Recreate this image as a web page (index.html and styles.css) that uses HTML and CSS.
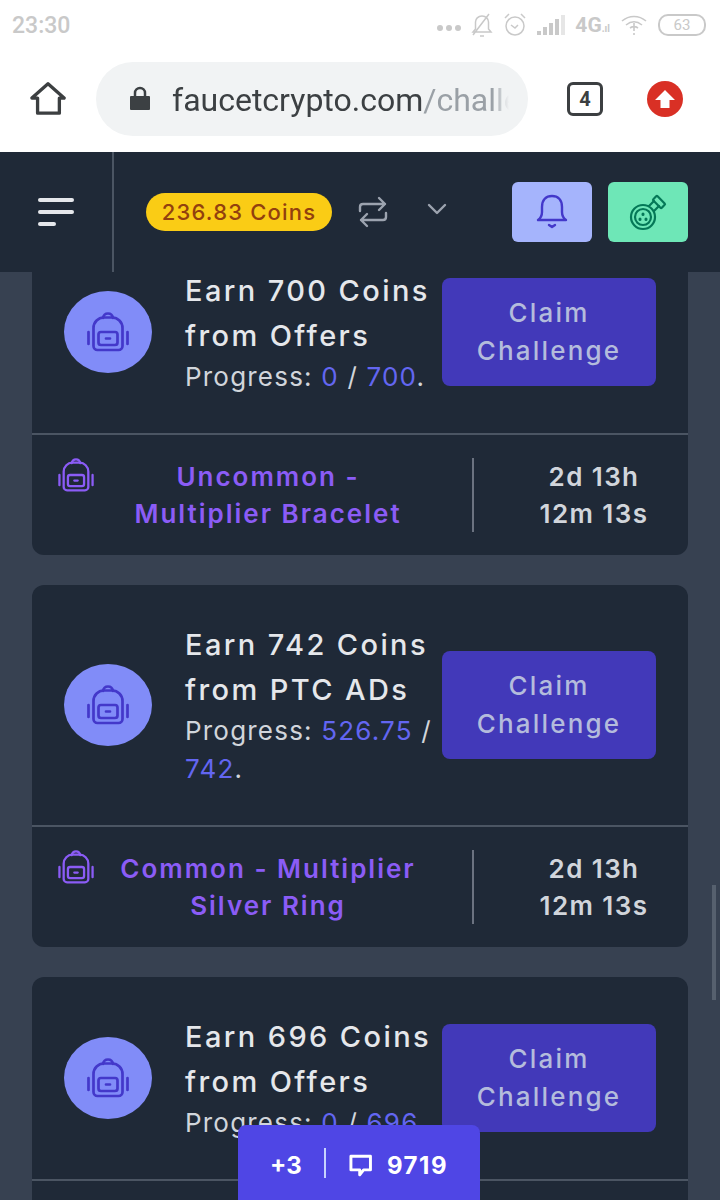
FILE: index.html
```html
<!DOCTYPE html>
<html>

<head>
  <title>Challenges</title>
  <meta name="viewport" content="width=device-width, initial-scale=1">
  <link rel="stylesheet" href="styles.css">
</head>

<body>
  <svg class="defs" width="0" height="0">
    <symbol id="backpack" viewBox="0 0 42 40" fill="none" stroke="currentColor" stroke-width="2.700" stroke-linecap="round" stroke-linejoin="round">
      <path d="M16 6c.5-3 2.300-4.500 5-4.500s4.500 1.500 5 4.500"/>
      <path d="M6.500 34V16c0-6 5-10.500 10-10.500h9c5 0 10 4.500 10 10.500v18a4 4 0 0 1-4 4h-21a4 4 0 0 1-4-4z"/>
      <rect x="11.500" y="20" width="19" height="13" rx="2.500"/>
      <path d="M19 26.500h4M1.500 20v12M40.500 20v12"/>
    </symbol>
  </svg>

  <div class="statusbar">
    <span class="clock">23:30</span>
    <div class="status-icons">
      <span class="dots"><i></i><i></i><i></i></span>
      <svg width="22" height="26" viewBox="0 0 22 26" fill="none" stroke="#c9c9c9" stroke-width="1.500"><path d="M2 20h18l-2.500-3v-7c0-3-2.500-6-6.500-6S4.500 7 4.500 10v7zM9 24h4M2 23L18 2"/></svg>
      <svg width="24" height="26" viewBox="0 0 24 26" fill="none" stroke="#c9c9c9" stroke-width="1.500"><circle cx="12" cy="14" r="9"/><path d="M8 13l4 3 3-3M2 6l4-4M22 6l-4-4"/></svg>
      <span class="signal"><i></i><i></i><i></i><i></i><i></i></span>
      <span class="net">4G<small>.ıl</small></span>
      <svg width="28" height="24" viewBox="0 0 28 24" fill="none" stroke="#c9c9c9" stroke-width="1.600"><path d="M2 8c7-6 17-6 24 0M6 12c5-4 11-4 16 0M10 15c3-2 5-2 8 0M14 10v8M14 20v2"/></svg>
      <span class="battery">63</span>
    </div>
  </div>

  <div class="browserbar">
    <svg class="home" width="36" height="36" viewBox="0 0 38 36" fill="none" stroke="#3c3f41" stroke-width="3.500" stroke-linejoin="round"><path d="M2 17L19 2l17 15h-5v16H8V17z"/></svg>
    <div class="urlbox">
      <svg width="20" height="24" viewBox="0 0 20 24"><path fill="#3c4043" d="M1 10h18a1 1 0 0 1 1 1v12a1 1 0 0 1-1 1H1a1 1 0 0 1-1-1V11a1 1 0 0 1 1-1z"/><path fill="none" stroke="#3c4043" stroke-width="2.500" d="M5 11V7a5 5 0 0 1 10 0v4"/></svg>
      <span class="url">faucetcrypto.com<span class="url-path">/challe</span></span>
    </div>
    <span class="tabs">4</span>
    <span class="update">
      <svg width="22" height="22" viewBox="0 0 22 22"><path fill="#fff" d="M11 2l10 10h-5.500v8h-9v-8H1z"/></svg>
    </span>
  </div>

  <div class="app">
    <header class="topnav">
      <div class="menu"><i></i><i></i><i></i></div>
      <div class="nav-body">
        <span class="coins">236.83 Coins</span>
        <svg class="swap" width="30" height="32" viewBox="0 0 30 32" fill="none" stroke="#9ca3af" stroke-width="2.400" stroke-linecap="round" stroke-linejoin="round"><path d="M2 15v-4c0-2 1-3 3-3h22M21 2l6 6-6 6M28 17v4c0 2-1 3-3 3H3M9 18l-6 6 6 6"/></svg>
        <svg class="chevron" width="20" height="12" viewBox="0 0 20 12" fill="none" stroke="#9ca3af" stroke-width="2.400" stroke-linecap="round" stroke-linejoin="round"><path d="M2 2l8 8 8-8"/></svg>
        <a class="nav-btn bell">
          <svg width="32" height="36" viewBox="0 0 32 36" fill="none" stroke="#4338ca" stroke-width="2.400" stroke-linecap="round" stroke-linejoin="round"><path d="M2 26h28c-3-2-4-5-4-8v-5C26 6 22 2 16 2S6 6 6 13v5c0 3-1 6-4 8z"/><path d="M13 31l3 2 3-2"/></svg>
        </a>
        <a class="nav-btn potion">
          <svg width="38" height="38" viewBox="0 0 38 38" fill="none" stroke="#047857" stroke-width="2.200" stroke-linecap="round" stroke-linejoin="round">
            <circle cx="14" cy="24" r="12"/>
            <circle cx="14" cy="24" r="8"/>
            <path d="M20 13l5-5M25 18l5-5"/>
            <rect x="24" y="6" width="12" height="6" rx="1" transform="rotate(45 30 9)"/>
            <path d="M14 21v.5M11 26v.5M17 26v.5" stroke-width="3"/>
          </svg>
        </a>
      </div>
    </header>

    <main class="content">
      <div class="card">
        <div class="card-top">
          <div class="badge"><svg width="42" height="40"><use href="#backpack"/></svg></div>
          <div class="card-text">
            <h3>Earn 700 Coins from Offers</h3>
            <p>Progress: <b>0</b> / <b>700</b>.</p>
          </div>
          <a class="claim">Claim Challenge</a>
        </div>
        <div class="card-foot">
          <svg width="36" height="34"><use href="#backpack"/></svg>
          <span class="reward">Uncommon - Multiplier Bracelet</span>
          <span class="timer">2d 13h 12m 13s</span>
        </div>
      </div>

      <div class="card">
        <div class="card-top">
          <div class="badge"><svg width="42" height="40"><use href="#backpack"/></svg></div>
          <div class="card-text">
            <h3>Earn 742 Coins from PTC ADs</h3>
            <p>Progress: <b>526.75</b> / <b>742</b>.</p>
          </div>
          <a class="claim">Claim Challenge</a>
        </div>
        <div class="card-foot">
          <svg width="36" height="34"><use href="#backpack"/></svg>
          <span class="reward">Common - Multiplier Silver Ring</span>
          <span class="timer">2d 13h 12m 13s</span>
        </div>
      </div>

      <div class="card">
        <div class="card-top">
          <div class="badge"><svg width="42" height="40"><use href="#backpack"/></svg></div>
          <div class="card-text">
            <h3>Earn 696 Coins from Offers</h3>
            <p>Progress: <b>0</b> / <b>696</b>.</p>
          </div>
          <a class="claim">Claim Challenge</a>
        </div>
        <div class="card-foot"></div>
      </div>
    </main>

    <div class="scrollthumb"></div>

    <div class="chatbar">
      <span>+3</span>
      <i class="chat-sep"></i>
      <svg width="26" height="26" viewBox="0 0 26 26" fill="none" stroke="#fff" stroke-width="3" stroke-linejoin="round"><path d="M3 4h20v14h-7l-4 5v-5H3z"/></svg>
      <span class="chat-count">9719</span>
    </div>
  </div>
</body>

</html>
```

FILE: styles.css
```css
html {
  font-family: Inter, "Open Sans", sans-serif;
}

body {
  margin: 0;
  width: 720px;
  height: 1200px;
  overflow: hidden;
  background-color: white;
}

.defs {
  position: absolute;
}

/* phone status bar */
.statusbar {
  height: 50px;
  padding: 0 14px 0 12px;
  display: flex;
  align-items: center;
  justify-content: space-between;
  font-family: Roboto, sans-serif;
  color: #c9c9c9;
}

.clock {
  font-size: 23px;
  font-weight: 500;
}

.status-icons {
  display: flex;
  align-items: center;
  gap: 10px;
}

.dots {
  display: flex;
  gap: 3px;
  margin-top: 6px;
}

.dots i {
  width: 6px;
  height: 6px;
  border-radius: 50%;
  background-color: #c9c9c9;
}

.signal {
  display: flex;
  align-items: flex-end;
  gap: 2px;
  height: 20px;
}

.signal i {
  width: 4px;
  background-color: #c9c9c9;
}

.signal i:nth-child(1) { height: 4px; }
.signal i:nth-child(2) { height: 8px; }
.signal i:nth-child(3) { height: 12px; }
.signal i:nth-child(4) { height: 16px; }
.signal i:nth-child(5) { height: 20px; background-color: #e6e6e6; }

.net {
  font-size: 21px;
  font-weight: 700;
}

.net small {
  font-size: 10px;
}

.battery {
  width: 44px;
  height: 18px;
  border: 2px solid #c9c9c9;
  border-radius: 10px;
  font-size: 15px;
  line-height: 18px;
  text-align: center;
}

/* browser toolbar */
.browserbar {
  height: 102px;
  display: flex;
  align-items: center;
  box-sizing: border-box;
  padding: 0 0 4px 30px;
}

.urlbox {
  flex: none;
  width: 432px;
  height: 74px;
  margin-left: 30px;
  padding: 2px 19px 0 34px;
  box-sizing: border-box;
  display: flex;
  align-items: center;
  gap: 22px;
  border-radius: 37px;
  background-color: #f1f3f4;
  font-family: Roboto, sans-serif;
}

.urlbox svg {
  flex: none;
  margin-top: -4px;
}

.url {
  font-size: 32px;
  color: #3c4043;
  white-space: nowrap;
  overflow: hidden;
  -webkit-mask-image: linear-gradient(to right, black 95%, transparent);
  mask-image: linear-gradient(to right, black 95%, transparent);
}

.url-path {
  color: #9aa0a6;
}

.tabs {
  width: 30px;
  height: 28px;
  margin-left: 39px;
  border: 3px solid #3c3f41;
  border-radius: 6px;
  font-family: Roboto, sans-serif;
  font-size: 20px;
  font-weight: 700;
  line-height: 28px;
  text-align: center;
  color: #3c3f41;
}

.update {
  width: 36px;
  height: 36px;
  margin-left: 44px;
  border-radius: 50%;
  background-color: #d93025;
  display: flex;
  align-items: center;
  justify-content: center;
}

/* site */
.app {
  position: relative;
  height: 1048px;
  overflow: hidden;
  background-color: #374151;
}

.topnav {
  position: relative;
  z-index: 1;
  height: 120px;
  display: flex;
  background-color: #1f2937;
}

.menu {
  width: 114px;
  box-sizing: border-box;
  padding-left: 38px;
  border-right: 2px solid #4b5563;
  display: flex;
  flex-direction: column;
  justify-content: center;
  gap: 8px;
}

.menu i {
  width: 36px;
  height: 4px;
  border-radius: 2px;
  background-color: #e5e7eb;
}

.menu i:last-child {
  width: 18px;
}

.nav-body {
  flex: 1;
  display: flex;
  align-items: center;
  padding: 0 32px 0 32px;
}

.coins {
  width: 186px;
  height: 38px;
  border-radius: 19px;
  background-color: #facc15;
  color: #92400e;
  font-size: 22px;
  font-weight: 500;
  letter-spacing: 1.2px;
  line-height: 38px;
  text-align: center;
}

.swap {
  margin-left: 26px;
}

.chevron {
  margin-left: 39px;
  margin-top: -6px;
}

.nav-btn {
  width: 80px;
  height: 60px;
  border-radius: 6px;
  display: flex;
  align-items: center;
  justify-content: center;
}

.bell {
  margin-left: auto;
  background-color: #a5b4fc;
}

.potion {
  margin-left: 16px;
  background-color: #6ee7b7;
}

.content {
  margin-top: -41px;
  padding: 0 32px;
  display: grid;
  gap: 30px;
}

.card {
  background-color: #1f2937;
  border-radius: 12px;
}

.card-top {
  display: flex;
  align-items: center;
  padding: 37px 32px;
}

.badge {
  flex: none;
  width: 88px;
  height: 82px;
  border-radius: 50%;
  background-color: #818cf8;
  color: #4338ca;
  display: flex;
  align-items: center;
  justify-content: center;
}

.card-text {
  flex: none;
  width: 290px;
  box-sizing: border-box;
  padding-left: 33px;
}

h3 {
  margin: 0;
  font-size: 29px;
  font-weight: 500;
  letter-spacing: 2.400px;
  line-height: 45px;
  white-space: pre-line;
  color: #e5e7eb;
}

.card-text p {
  margin: 0;
  font-size: 26px;
  letter-spacing: 1.200px;
  line-height: 38px;
  color: #d1d5db;
}

.card-text b {
  font-weight: 400;
  color: #6366f1;
}

.claim {
  flex: none;
  width: 214px;
  height: 108px;
  box-sizing: border-box;
  padding: 16px 24px;
  border-radius: 8px;
  background-color: #4239b9;
  color: #b4bcdc;
  font-size: 26px;
  font-weight: 500;
  letter-spacing: 2.200px;
  line-height: 38px;
  text-align: center;
}

.card-foot {
  min-height: 74px;
  padding: 23px 20px 23px 26px;
  border-top: 2px solid #4b5563;
  display: flex;
  align-items: flex-start;
  color: #8b5cf6;
}

.reward {
  flex: none;
  width: 378px;
  padding: 0 39px 0 9px;
  box-sizing: border-box;
  font-size: 26px;
  font-weight: 600;
  letter-spacing: 2px;
  line-height: 37px;
  text-align: center;
}

.timer {
  flex: none;
  width: 196px;
  padding-left: 46px;
  border-left: 2px solid #6b7280;
  box-sizing: border-box;
  font-size: 26px;
  font-weight: 600;
  letter-spacing: 1.400px;
  line-height: 37px;
  text-align: center;
  color: #d1d5db;
}

.scrollthumb {
  position: absolute;
  right: 4px;
  top: 733px;
  width: 4px;
  height: 115px;
  background-color: #56606e;
}

.chatbar {
  position: absolute;
  left: 238px;
  bottom: 0;
  z-index: 2;
  width: 242px;
  height: 75px;
  box-sizing: border-box;
  padding: 5px 32px 0;
  border-radius: 8px 8px 0 0;
  background-color: #4f46e5;
  color: white;
  font-size: 24px;
  font-weight: 700;
  display: flex;
  align-items: center;
  gap: 12px;
}

.chat-sep {
  width: 2px;
  height: 30px;
  margin: -4px 10px 0;
  background-color: #c7d2fe;
}

.chat-count {
  margin-left: 2px;
  letter-spacing: 1.500px;
}
```
